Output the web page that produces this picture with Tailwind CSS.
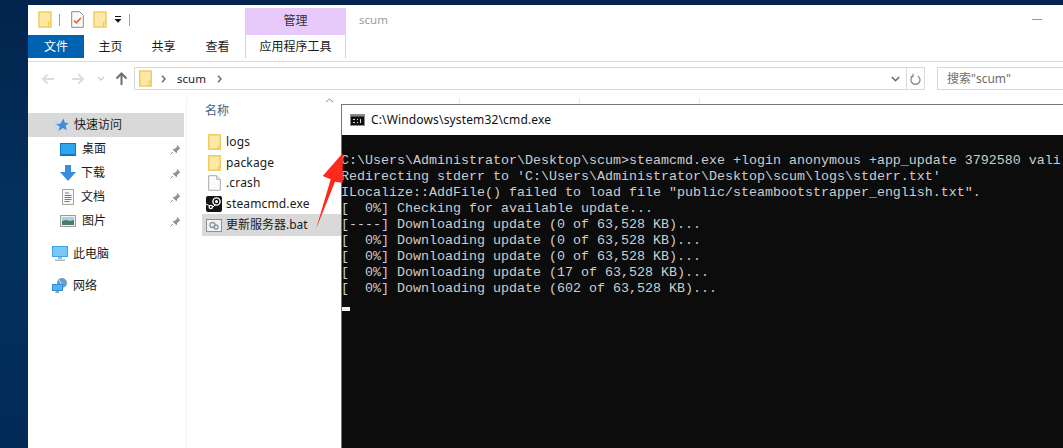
<!DOCTYPE html>
<html lang="zh">
<head>
<meta charset="utf-8">
<title>scum</title>
<script src="https://cdn.jsdelivr.net/npm/@tailwindcss/browser@4"></script>
</head>
<body class="m-0">
<div class="relative w-[1063px] h-[448px] overflow-hidden bg-gradient-to-b from-[#02244c] via-[#03325f] to-[#012a57] pl-[28px] pt-[5px] font-['Noto_Sans','Noto_Sans_CJK_SC',sans-serif] text-[12px] text-[#1a1a1a]">
  <!-- explorer window -->
  <div class="flex flex-col w-[1035px] h-[443px] bg-white">
    <!-- title row -->
    <div class="flex h-[30px] shrink-0">
      <div class="flex items-center w-[217px] pl-[10px] pb-[1px]">
        <svg width="14" height="17" viewBox="0 0 14 17"><rect x="1" y="1" width="12" height="15" fill="#fde9a5" stroke="#eccb55" stroke-width="1.4"/><path d="M10.5 16v-5h2.5" fill="none" stroke="#eccb55"/></svg>
        <div class="w-px h-[12px] bg-[#a0a0a0] ml-[7px]"></div>
        <svg class="ml-[11px]" width="13" height="17" viewBox="0 0 13 17"><path d="M.7.7h8l3.600 3.600v12H.7z" fill="#fafafa" stroke="#8a8a8a"/><path d="M3 9.500l2.200 2.300L10 7" fill="none" stroke="#e8602c" stroke-width="1.600"/></svg>
        <svg class="ml-[9px]" width="14" height="17" viewBox="0 0 14 17"><rect x="1" y="1" width="12" height="15" fill="#fde9a5" stroke="#eccb55" stroke-width="1.4"/><path d="M10.5 16v-5h2.500" fill="none" stroke="#eccb55"/></svg>
        <svg class="ml-[7px]" width="8" height="7" viewBox="0 0 8 7"><path d="M1 .5h6" stroke="#111"/><path d="M.5 3h7L4 6.800z" fill="#111"/></svg>
        <div class="w-px h-[12px] bg-[#a0a0a0] ml-[7px]"></div>
      </div>
      <div class="w-[101px] mt-[3px] pb-[2px] bg-[#e8c9fb] flex items-center justify-center text-[12px] text-[#333]">管理</div>
      <div class="pl-[13px] pt-[6px] text-[11.5px] text-[#9a9a9a]">scum</div>
      <div class="ml-auto w-[10px] h-px mt-[14px] mr-[21px] bg-[#999]"></div>
    </div>
    <!-- ribbon tabs -->
    <div class="flex h-[23px] shrink-0 items-stretch">
      <div class="w-[56px] pt-[1px] bg-[#0063b1] text-white flex items-center justify-center">文件</div>
      <div class="w-[53px] pt-[1px] flex items-center justify-center">主页</div>
      <div class="w-[53px] pt-[1px] flex items-center justify-center">共享</div>
      <div class="w-[55px] pt-[1px] flex items-center justify-center">查看</div>
      <div class="w-[101px] pt-[1px] border-x border-[#d2d2d2] flex items-center justify-center">应用程序工具</div>
    </div>
    <div class="h-[4px] shrink-0 border-b border-[#dadada]"></div>
    <!-- nav row -->
    <div class="flex items-center h-[28px] shrink-0 pt-[5px]">
      <div class="flex items-center w-[106px] shrink-0 pl-[13px]">
        <svg width="14" height="12" viewBox="0 0 14 12"><path d="M13 6H2M6.500 1.500L2 6l4.500 4.500" fill="none" stroke="#dcdcdc" stroke-width="2"/></svg>
        <svg class="ml-[16px]" width="14" height="12" viewBox="0 0 14 12"><path d="M1 6h11M7.500 1.500L12 6l-4.500 4.500" fill="none" stroke="#dcdcdc" stroke-width="2"/></svg>
        <svg class="ml-[12px]" width="8" height="5" viewBox="0 0 8 5"><path d="M1 1l3 3 3-3" fill="none" stroke="#d0d0d0" stroke-width="1.300"/></svg>
        <svg class="ml-[10px]" width="13" height="13" viewBox="0 0 13 13"><path d="M6.500 13V2M1.500 6.500l5-5 5 5" fill="none" stroke="#6f6f6f" stroke-width="2"/></svg>
      </div>
      <div class="flex items-center w-[791px] h-[23px] shrink-0 border border-[#d9d9d9]">
        <svg class="ml-[4px]" width="13" height="17" viewBox="0 0 13 17"><rect x=".8" y="1" width="11.400" height="15" fill="#fde9a5" stroke="#eccb55" stroke-width="1.400"/><path d="M10 16v-5h2.500" fill="none" stroke="#eccb55"/></svg>
        <svg class="ml-[9px]" width="5" height="8" viewBox="0 0 5 8"><path d="M1 .8L4 4 1 7.200" fill="none" stroke="#707070" stroke-width="1.500"/></svg>
        <span class="ml-[11px] text-[11.5px]">scum</span>
        <svg class="ml-[11px]" width="5" height="8" viewBox="0 0 5 8"><path d="M1 .8L4 4 1 7.200" fill="none" stroke="#707070" stroke-width="1.500"/></svg>
        <svg class="ml-auto mr-[3px]" width="9" height="6" viewBox="0 0 9 6"><path d="M.8 1l3.700 3.700L8.200 1" fill="none" stroke="#6a6a6a" stroke-width="1.600"/></svg>
        <div class="w-px h-full bg-[#d9d9d9] ml-[3px]"></div>
        <div class="w-[17px] flex justify-center">
          <svg width="11" height="12" viewBox="0 0 11 12"><path d="M3.200 3a4.500 4.500 0 1 0 4.500 0M3 .8V3.600H.5" fill="none" stroke="#8a8a8a" stroke-width="1.300"/></svg>
        </div>
      </div>
      <div class="flex items-center flex-1 h-[23px] ml-[12px] border border-[#d9d9d9] border-r-0 pl-[9px] text-[#6d6d6d]">搜索"scum"</div>
    </div>
    <!-- body -->
    <div class="flex flex-1 min-h-0 pt-[8px]">
      <!-- nav pane -->
      <nav class="w-[159px] shrink-0 border-r border-[#f2f2f2] pt-[15px] relative">
        <div class="flex items-center h-[24px] w-[156px] bg-[#d9d9d9] pl-[26px]">
          <svg width="15" height="14" viewBox="0 0 15 14"><path d="M9.500.5l1.400 4.300 3.800.3-3 2.700 1 4.700-3.700-2.500-4.500 3 1.200-4.500L2 6.200l4.500-.8z" fill="#3a8fdc"/><path d="M0 4.500h4M1 7.500h3M0 10h3" stroke="#a9d2f2"/></svg>
          <span class="ml-[5px]">快速访问</span>
        </div>
        <div class="flex items-center h-[24px] pl-[32px] w-[156px]">
          <svg width="16" height="13" viewBox="0 0 16 13"><rect width="16" height="13" fill="#0f76c7"/><rect x="1" y="1" width="14" height="10" fill="#2fa4ee"/></svg>
          <span class="ml-[6px]">桌面</span>
          <svg class="ml-auto mr-[3px]" width="11" height="11" viewBox="0 0 11 11"><path d="M6.500.5l4 4-1.500.5-2 2.500-.3 2-4.200-4.200 2-.3L7 3z" fill="#8b8f94"/><path d="M3 8L.5 10.500" stroke="#8b8f94"/></svg>
        </div>
        <div class="flex items-center h-[24px] pl-[32px] w-[156px]">
          <svg width="16" height="16" viewBox="0 0 16 16"><path d="M5 0h6v7h5l-8 9-8-9h5z" fill="#3a8cdc"/></svg>
          <span class="ml-[5px]">下载</span>
          <svg class="ml-auto mr-[3px]" width="11" height="11" viewBox="0 0 11 11"><path d="M6.500.5l4 4-1.500.5-2 2.500-.3 2-4.200-4.200 2-.3L7 3z" fill="#8b8f94"/><path d="M3 8L.5 10.500" stroke="#8b8f94"/></svg>
        </div>
        <div class="flex items-center h-[24px] pl-[34px] w-[156px]">
          <svg width="12" height="16" viewBox="0 0 12 16"><rect x=".5" y=".5" width="11" height="15" fill="#f7f7f7" stroke="#a6a6a6"/><path d="M3 4h4M2.500 6.500h7M2.500 8.500h7M2.500 10.500h7M2.500 12.500h5" stroke="#3c86c8"/></svg>
          <span class="ml-[7px]">文档</span>
          <svg class="ml-auto mr-[3px]" width="11" height="11" viewBox="0 0 11 11"><path d="M6.500.5l4 4-1.500.5-2 2.500-.3 2-4.200-4.200 2-.3L7 3z" fill="#8b8f94"/><path d="M3 8L.5 10.500" stroke="#8b8f94"/></svg>
        </div>
        <div class="flex items-center h-[24px] pl-[32px] w-[156px]">
          <svg width="16" height="12" viewBox="0 0 16 12"><rect x=".5" y=".5" width="15" height="11" fill="#eef2f5" stroke="#9a9a9a"/><rect x="2" y="2" width="12" height="4" fill="#a9cfe6"/><path d="M2 6l4-1 4 1 4-1v5H2z" fill="#4e7a68"/></svg>
          <span class="ml-[6px]">图片</span>
          <svg class="ml-auto mr-[3px]" width="11" height="11" viewBox="0 0 11 11"><path d="M6.500.5l4 4-1.500.5-2 2.500-.3 2-4.200-4.200 2-.3L7 3z" fill="#8b8f94"/><path d="M3 8L.5 10.500" stroke="#8b8f94"/></svg>
        </div>
        <div class="flex items-center h-[24px] pl-[24px] mt-[9px]">
          <svg width="16" height="16" viewBox="0 0 16 16"><rect width="16" height="11" fill="#3fa5ea"/><rect x="1" y="1" width="14" height="9" fill="#79c7f6"/><path d="M6 11h4v2H6zM3 13.500h10V15H3z" fill="#a9b4bc"/></svg>
          <span class="ml-[5px]">此电脑</span>
        </div>
        <div class="flex items-center h-[24px] pl-[24px] mt-[8px]">
          <svg width="16" height="16" viewBox="0 0 16 16"><circle cx="10" cy="5" r="5" fill="#6d9cc4"/><path d="M7 2c2 2 3 4 2 7" stroke="#cfe3f2" fill="none"/><rect y="6" width="11" height="7" fill="#2e8ee0"/><rect x="1" y="7" width="9" height="5" fill="#56b2f2"/><path d="M4 13h3v2H3" fill="#9aa6ae"/></svg>
          <span class="ml-[5px]">网络</span>
        </div>
      </nav>
      <!-- file list -->
      <section class="flex-1 min-w-0 relative">
        <div class="pl-[18px] pt-[5px] h-[33px] leading-[16px] text-[#4c607a] relative">名称
          <svg class="absolute left-[138px] top-0" width="9" height="5" viewBox="0 0 9 5"><path d="M.8 4.200L4.500 1l3.700 3.200" fill="none" stroke="#8a8a8a"/></svg>
          <div class="absolute left-[272px] top-0 w-px h-[6px] bg-[#e8e8e8]"></div>
          <div class="absolute left-[392px] top-0 w-px h-[6px] bg-[#e8e8e8]"></div>
          <div class="absolute left-[512px] top-0 w-px h-[6px] bg-[#e8e8e8]"></div>
        </div>
        <div class="flex items-center h-[21px] w-[139px] ml-[15px] pl-[6px]">
          <svg width="13" height="16" viewBox="0 0 13 16"><rect x=".8" y=".8" width="11.400" height="14.400" fill="#fde9a5" stroke="#eccb55" stroke-width="1.400"/><path d="M10 15.500V12h2.500" fill="none" stroke="#eccb55"/></svg>
          <span class="ml-[5px] tracking-[.15px]">logs</span>
        </div>
        <div class="flex items-center h-[21px] w-[139px] ml-[15px] pl-[6px]">
          <svg width="13" height="16" viewBox="0 0 13 16"><rect x=".8" y=".8" width="11.400" height="14.400" fill="#fde9a5" stroke="#eccb55" stroke-width="1.400"/><path d="M10 15.500V12h2.500" fill="none" stroke="#eccb55"/></svg>
          <span class="ml-[5px] tracking-[.15px]">package</span>
        </div>
        <div class="flex items-center h-[20px] w-[139px] ml-[15px] pl-[6px]">
          <svg width="13" height="16" viewBox="0 0 13 16"><path d="M.7.7h8l3.600 3.600v11H.7z" fill="#fbfbfb" stroke="#a8a8a8"/><path d="M8.500.7v3.800h3.800" fill="#eee" stroke="#bbb"/></svg>
          <span class="ml-[5px] tracking-[.15px]">.crash</span>
        </div>
        <div class="flex items-center h-[21px] w-[139px] ml-[15px] pl-[4px]">
          <svg width="16" height="16" viewBox="0 0 16 16"><rect width="16" height="16" rx="2" fill="#151515"/><circle cx="10.500" cy="5.500" r="3.600" fill="none" stroke="#fff" stroke-width="1.400"/><circle cx="10.500" cy="5.500" r="1.500" fill="#fff"/><circle cx="4.800" cy="11" r="2.300" fill="#fff"/><circle cx="4.800" cy="11" r="1" fill="#151515"/><path d="M0 8l4 2M7 11l3-3" stroke="#fff"/></svg>
          <span class="ml-[4px] tracking-[.15px]">steamcmd.exe</span>
        </div>
        <div class="flex items-center h-[22px] w-[139px] ml-[15px] pl-[4px] bg-[#d9d9d9]">
          <svg width="16" height="13" viewBox="0 0 16 13"><rect x=".5" y=".5" width="15" height="12" fill="#f2f2f2" stroke="#8f8f8f"/><circle cx="6.500" cy="6" r="2.500" fill="none" stroke="#8d9aa6" stroke-width="1.400"/><circle cx="10" cy="8" r="2" fill="none" stroke="#8d9aa6" stroke-width="1.400"/></svg>
          <span class="ml-[4px]">更新服务器.bat</span>
        </div>
      </section>
    </div>
  </div>
  <!-- cmd window -->
  <div class="absolute left-[341px] top-[104px] w-[722px] h-[344px] flex flex-col border-l border-t border-[#767676] bg-[#0c0c0c]">
    <div class="flex items-center h-[30px] shrink-0 bg-white pl-[8px] text-[#111] text-[12px]">
      <svg width="15" height="12" viewBox="0 0 15 12"><rect width="15" height="12" fill="#8a8a8a"/><rect x="1" y="2.500" width="13" height="8.500" fill="#111"/><path d="M3 5h2v1H3zM3 8h2v1H3zM7 5h1v1H7zM7 8h1v1H7zM10 5h1v4h-1z" fill="#ddd"/></svg>
      <span class="ml-[6px] tracking-[.15px]">C:\Windows\system32\cmd.exe</span>
    </div>
    <pre class="m-0 -ml-px pt-[18px] font-['Liberation_Mono',monospace] text-[13.333px] leading-[16px] text-[#cccccc] overflow-hidden whitespace-pre">C:\Users\Administrator\Desktop\scum&gt;steamcmd.exe +login anonymous +app_update 3792580 vali
Redirecting stderr to 'C:\Users\Administrator\Desktop\scum\logs\stderr.txt'
ILocalize::AddFile() failed to load file "public/steambootstrapper_english.txt".
[  0%] Checking for available update...
[----] Downloading update (0 of 63,528 KB)...
[  0%] Downloading update (0 of 63,528 KB)...
[  0%] Downloading update (0 of 63,528 KB)...
[  0%] Downloading update (17 of 63,528 KB)...
[  0%] Downloading update (602 of 63,528 KB)...</pre>
    <div class="w-[8px] h-[4px] mt-[10px] bg-[#f2f2f2]"></div>
  </div>
  <!-- red annotation arrow -->
  <svg class="absolute left-[310px] top-[150px]" width="40" height="90" viewBox="0 0 40 90"><polygon points="32,4 12.700,26 20.700,29.300 6,79 25,31.700 32.800,33 32.800,4" fill="#fb2a1c"/></svg>
</div>
</body>
</html>
